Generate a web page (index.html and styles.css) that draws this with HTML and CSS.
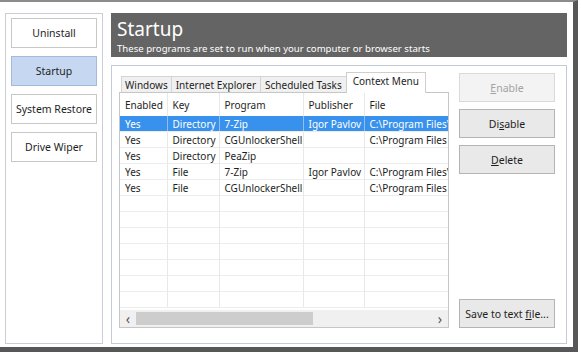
FILE: index.html
```html
<!DOCTYPE html>
<html lang="en">
<head>
    <meta charset="UTF-8">
    <title>Startup</title>
    <link rel="stylesheet" href="styles.css">
</head>
<body>

<div class="window">
    <div class="sidebar">
        <div class="nav-btn">Uninstall</div>
        <div class="nav-btn active">Startup</div>
        <div class="nav-btn">System Restore</div>
        <div class="nav-btn">Drive Wiper</div>
    </div>

    <div class="main">
        <div class="header">
            <h1>Startup</h1>
            <p>These programs are set to run when your computer or browser starts</p>
        </div>

        <div class="content">
            <div class="tabview">
                <div class="tabs">
                    <div class="tab">Windows</div>
                    <div class="tab">Internet Explorer</div>
                    <div class="tab">Scheduled Tasks</div>
                    <div class="tab active">Context Menu</div>
                </div>
                <div class="list">
                    <table>
                        <colgroup>
                            <col class="c-enabled">
                            <col class="c-key">
                            <col class="c-program">
                            <col class="c-publisher">
                            <col class="c-file">
                        </colgroup>
                        <thead>
                            <tr><th>Enabled</th><th>Key</th><th>Program</th><th>Publisher</th><th>File</th></tr>
                        </thead>
                        <tbody>
                            <tr class="selected"><td>Yes</td><td>Directory</td><td>7-Zip</td><td>Igor Pavlov</td><td>C:\Program Files\7-Zip\7-zip.dll</td></tr>
                            <tr><td>Yes</td><td>Directory</td><td>CGUnlockerShell</td><td></td><td>C:\Program Files (x86)\CGUnlocker</td></tr>
                            <tr><td>Yes</td><td>Directory</td><td>PeaZip</td><td></td><td></td></tr>
                            <tr><td>Yes</td><td>File</td><td>7-Zip</td><td>Igor Pavlov</td><td>C:\Program Files\7-Zip\7-zip.dll</td></tr>
                            <tr><td>Yes</td><td>File</td><td>CGUnlockerShell</td><td></td><td>C:\Program Files (x86)\CGUnlocker</td></tr>
                            <tr><td></td><td></td><td></td><td></td><td></td></tr>
                            <tr><td></td><td></td><td></td><td></td><td></td></tr>
                            <tr><td></td><td></td><td></td><td></td><td></td></tr>
                            <tr><td></td><td></td><td></td><td></td><td></td></tr>
                            <tr><td></td><td></td><td></td><td></td><td></td></tr>
                            <tr><td></td><td></td><td></td><td></td><td></td></tr>
                            <tr><td></td><td></td><td></td><td></td><td></td></tr>
                        </tbody>
                    </table>
                    <div class="hscroll">
                        <span class="arrow">&lsaquo;</span>
                        <div class="track"><div class="thumb"></div></div>
                        <span class="arrow">&rsaquo;</span>
                    </div>
                </div>
            </div>

            <div class="actions">
                <button class="btn" disabled><u>E</u>nable</button>
                <button class="btn">Di<u>s</u>able</button>
                <button class="btn"><u>D</u>elete</button>
                <button class="btn save">Save to text <u>f</u>ile...</button>
            </div>
        </div>
    </div>
</div>

</body>
</html>
```

FILE: styles.css
```css
body {
    margin: 0;
    background-color: #fff;
    font-family: "Noto Sans", Arial, sans-serif;
    font-size: 10px;
    color: #1e1e1e;
}

.window {
    display: flex;
    gap: 8px;
    width: 562px;
    height: 331px;
    padding: 11px 6px 3px 5px;
    background-color: #fff;
    border-top: 2px solid #8c8c8c;
    border-right: 5px solid #575757;
    border-bottom: 5px solid #575757;
}

/* left navigation */
.sidebar {
    display: flex;
    flex-direction: column;
    gap: 8px;
    width: 86px;
    padding: 4px 5px;
    border: 1px solid #c9ced6;
}

.nav-btn {
    height: 28px;
    line-height: 28px;
    text-align: center;
    border: 1px solid #c8c8c8;
    background-color: #fff;
    font-size: 10.5px;
}

.nav-btn.active {
    background-color: #c6d8f1;
    border-color: #a3bad9;
}

/* main area */
.main {
    display: flex;
    flex-direction: column;
    gap: 8px;
    width: 456px;
}

.header {
    flex-shrink: 0;
    height: 44px;
    box-sizing: border-box;
    padding: 3px 6px 0;
    background-color: #646464;
    color: #fff;
}

.header h1 {
    margin: 0;
    font-size: 19px;
    font-weight: normal;
    line-height: 26px;
}

.header p {
    margin: 0;
    font-size: 9.6px;
    line-height: 13px;
}

.content {
    flex: 1;
    display: flex;
    gap: 10px;
    padding: 7px 10px 15px 7px;
    border: 1px solid #c3ccd6;
    background-color: #fff;
}

/* tabs + list */
.tabview {
    display: flex;
    flex-direction: column;
    width: 330px;
}

.tabs {
    display: flex;
    align-items: flex-end;
    height: 19px;
    padding-left: 2px;
}

.tab {
    height: 15px;
    line-height: 16px;
    padding: 0 3px;
    background-color: #f0f0f0;
    border: 1px solid #d4d4d4;
    border-bottom: none;
    margin-right: -1px;
}

.tab:nth-child(2),
.tab:nth-child(3) {
    padding: 0 4px;
}

.tab.active {
    position: relative;
    z-index: 1;
    height: 20px;
    line-height: 17px;
    padding: 0 6px;
    margin-bottom: -1px;
    background-color: #fff;
    border-color: #cfcfcf;
}

.list {
    flex: 1;
    display: flex;
    flex-direction: column;
    border: 1px solid #c6c6c6;
    overflow: hidden;
}

table {
    border-collapse: collapse;
    table-layout: fixed;
    width: 329px;
}

.c-enabled { width: 47px; }
.c-key { width: 52px; }
.c-program { width: 84px; }
.c-publisher { width: 61px; }
.c-file { width: 85px; }

th, td {
    padding: 0 0 0 5px;
    text-align: left;
    font-weight: normal;
    white-space: nowrap;
    overflow: hidden;
    border-right: 1px solid #e8e8e8;
}

th {
    height: 23px;
}

td {
    height: 14px;
    line-height: 14px;
    padding-top: 1px;
    border-bottom: 1px solid #ececec;
}

tr.selected td {
    background-color: #3891ec;
    color: #fff;
    border-right-color: #8fc0f3;
}

.hscroll {
    display: flex;
    align-items: center;
    height: 17px;
    margin-top: auto;
    background-color: #f0f0f0;
}

.hscroll .arrow {
    width: 16px;
    text-align: center;
    font-size: 14px;
    line-height: 17px;
    color: #555;
}

.track {
    flex: 1;
    height: 13px;
}

.thumb {
    width: 177px;
    height: 13px;
    background-color: #cdcdcd;
}

/* action buttons */
.actions {
    display: flex;
    flex-direction: column;
    gap: 7px;
    width: 96px;
}

.btn {
    height: 29px;
    padding: 0;
    font-family: "Noto Sans", Arial, sans-serif;
    font-size: 10.5px;
    color: #1e1e1e;
    background-color: #e9e9e9;
    border: 1px solid #b4b4b4;
}

.btn:disabled {
    color: #a3a3a3;
    background-color: #f3f3f3;
    border-color: #dadada;
}

.btn.save {
    margin-top: auto;
}
```
